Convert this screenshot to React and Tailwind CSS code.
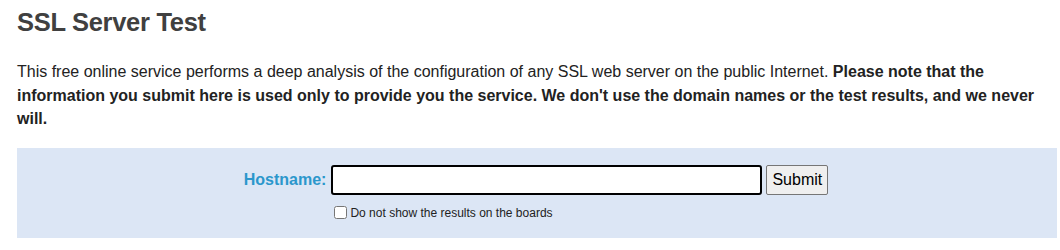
import React from "react";

export default function App() {
  return (
    <div className="bg-white w-[1060px] h-[250px] overflow-hidden pl-[17px] pr-[3px] font-['Liberation_Sans',Arial,sans-serif]">
      <h1 className="pt-[7px] text-[25.5px] leading-[30px] font-bold text-[#404040] tracking-[-0.3px]">
        SSL Server Test
      </h1>

      <p className="mt-[23px] text-[16px] leading-[23.5px] text-[#222]">
        This free online service performs a deep analysis of the configuration of any SSL web server on the public
        Internet.{" "}
        <b>
          Please note that the information you submit here is used only to provide you the service. We don't use the
          domain names or the test results, and we never will.
        </b>
      </p>

      <div className="mt-[17px] h-[90px] bg-[#dce6f5] flex justify-center pt-[17px] pr-[2px]">
        <div className="grid grid-cols-[auto_431px_auto] gap-x-[4px] items-start">
          <label className="text-[16px] font-bold text-[#2b97cc] leading-[30px] pr-[1px]">Hostname:</label>
          <div className="flex flex-col">
            <input
              type="text"
              className="h-[30px] w-[431px] bg-white border-2 border-black rounded-[3px] px-[3px] outline-none"
            />
            <label className="mt-[10px] flex items-center gap-[3px] text-[12px] text-[#222] leading-[16px]">
              <input type="checkbox" className="w-[13px] h-[13px] ml-[3px] m-0" />
              Do not show the results on the boards
            </label>
          </div>
          <button className="h-[30px] px-[5px] bg-[#efefef] border border-[#767676] rounded-[2px] text-[16px] text-black">
            Submit
          </button>
        </div>
      </div>
    </div>
  );
}
